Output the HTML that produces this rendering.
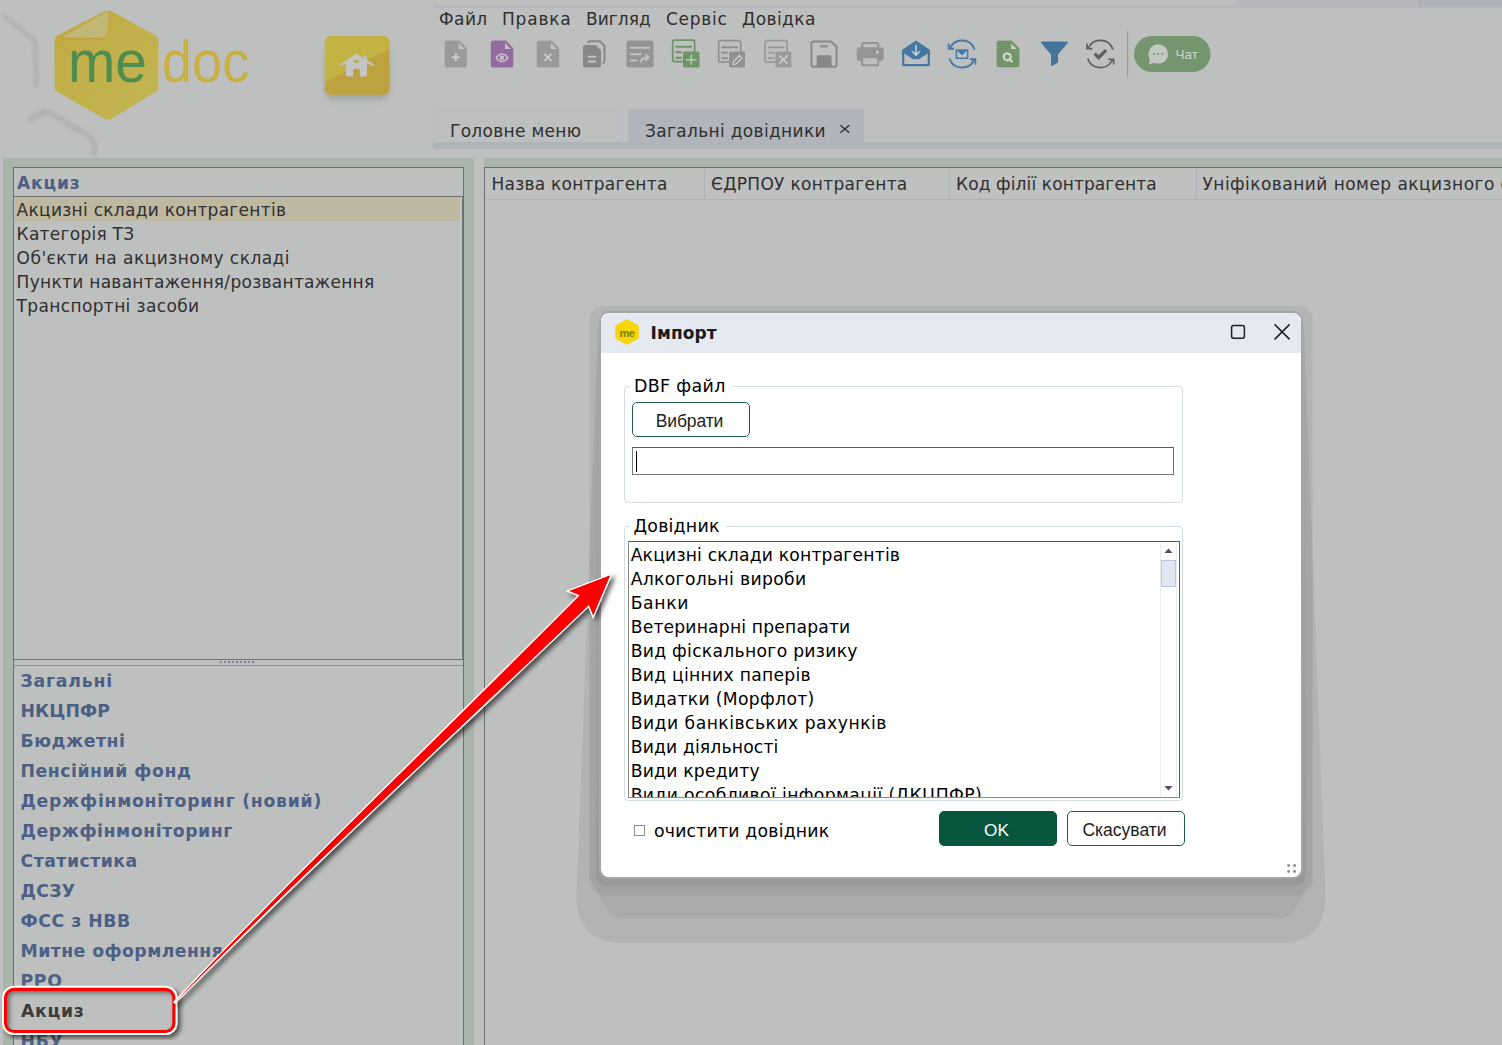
<!DOCTYPE html>
<html lang="uk">
<head>
<meta charset="utf-8">
<title>M.E.Doc — Імпорт</title>
<style>
*{box-sizing:border-box;margin:0;padding:0}
html,body{width:1502px;height:1045px;overflow:hidden}
body{background:#bec0bf;font-family:"DejaVu Sans","Liberation Sans",sans-serif;font-size:17px;color:#2f2f2f;position:relative}
.abs{position:absolute}
.t{position:absolute;white-space:nowrap;line-height:24px;height:24px}
/* top */
#topstrip{left:433px;top:5px;width:1069px;height:3px;background:#b5b8be}
#menu span{top:7px;font-size:17px;letter-spacing:.42px}
#tabstrip{left:433px;top:142px;width:1069px;height:7px;background:#b0b3b8}
.tab{top:109px;height:34px;border:1px solid #b6b9c4;border-bottom:none;font-size:17px;letter-spacing:.3px;line-height:43px;white-space:nowrap}
#tab1{left:433px;width:190px;padding-left:16px}
#tab2{left:628px;width:236px;background:#b1b4ba;border-color:#b1b4ba;padding-left:16px;letter-spacing:.33px}
/* left */
.green{background:#a9b4ab}
#lp{left:3px;top:158px;width:471px;height:887px}
#lbox{left:13px;top:167px;width:451px;height:900px;border:1px solid #6f6f6f;background:#bec0bf}
#lhead{left:14px;top:168px;width:449px;height:29px;background:#bfc1c1;border-bottom:1px solid #6f6f6f}
.bold{font-weight:bold;color:#4b6084;letter-spacing:.9px}
#sel{left:15px;top:197px;width:445px;height:24px;background:#bfb8a1}
.li{left:17px;letter-spacing:.27px;margin-top:1px}
#lbox2{left:14px;top:659px;width:449px;height:7px;border-top:1px solid #6f6f6f;border-bottom:1px solid #7f93b5;background:#bec0bf}
.cat{left:20.500px;font-weight:bold;color:#4b6084;letter-spacing:.68px;font-size:17.300px;margin-top:1px}
/* right */
#rp{left:484px;top:158px;width:1030px;height:900px}
#rbox{left:484px;top:167px;width:1030px;height:900px;border:1px solid #6f6f6f;background:#bec0bf}
#rhead{left:485px;top:168px;width:1020px;height:32px;background:#bfc1c1;border-bottom:1px solid #adb1ba}
.th{top:172px;letter-spacing:.18px}
.vs{top:168px;width:1px;height:32px;background:#adb1ba}
/* dialog */
#dlg{left:599px;top:311px;width:704px;height:568px;border:2px solid #a6a6a6;border-radius:10px;background:#fff;overflow:hidden}
#dtitle{left:0;top:0;width:700px;height:40px;background:#e4e9f2}
.seg{font-family:"Liberation Sans",sans-serif}
.fs{border:1px solid #d3dde3;border-radius:4px}
.btn{border:1.500px solid #1d5f4c;border-radius:5px;background:#fff;font-family:"Liberation Sans",sans-serif;font-size:17.500px;text-align:center;color:#1c1c1c}
.dl{left:632px;font-size:17.200px;letter-spacing:.2px;color:#000;margin-top:1px}
</style>
</head>
<body>
<!-- TOP BAR -->
<div class="abs" id="topstrip"></div>
<div class="abs" style="left:1236px;top:0;width:182px;height:5px;background:#b7b9bd"></div>
<div class="abs" style="left:1418px;top:0;width:84px;height:7px;background:#aeb1b8"></div>
<div id="menu">
<span class="t" style="left:439px;letter-spacing:0.42px">Файл</span>
<span class="t" style="left:502px;letter-spacing:0.816px">Правка</span>
<span class="t" style="left:586px;letter-spacing:0.06px">Вигляд</span>
<span class="t" style="left:666px;letter-spacing:0.708px">Сервіс</span>
<span class="t" style="left:742px;letter-spacing:0.42px">Довідка</span>
</div>

<svg class="abs" style="left:0;top:0" width="433" height="158" viewBox="0 0 433 158">
<defs>
<linearGradient id="hx" x1="0" y1="0" x2="1" y2="1"><stop offset="0" stop-color="#c3a640"/><stop offset=".4" stop-color="#c1b049"/><stop offset="1" stop-color="#c2b553"/></linearGradient>
<linearGradient id="hb" x1="0" y1="1" x2="1" y2="0"><stop offset="0" stop-color="#cdb93c"/><stop offset=".5" stop-color="#ccb73b"/><stop offset=".5" stop-color="#c9a83a"/><stop offset="1" stop-color="#c9a53a"/></linearGradient>
<filter id="bl" x="-20%" y="-20%" width="140%" height="160%"><feGaussianBlur stdDeviation="3"/></filter>
<filter id="b1"><feGaussianBlur stdDeviation=".8"/></filter>
</defs>
<g fill="none" stroke="#b3b4b4" stroke-width="6.500" stroke-linejoin="round" filter="url(#b1)">
<path d="M3 15L30 37Q35 41 35.500 48L36.500 87" stroke-width="6"/>
<path d="M28 121L42 113Q46 110.500 51 113.500L88 135.500Q93.500 139 94 145L94.500 157"/>
</g>
<path d="M107.900 10.500Q110.500 10.500 113 12L155.500 35.500Q158.500 37.500 158.500 41V87Q158.500 90.500 155.500 92L113 118Q107.900 121 103 118L57.500 92Q54.500 90.500 54.500 87V41Q54.500 37.500 57.500 35.500L103 12Q105.500 10.500 107.900 10.500Z" fill="url(#hx)"/>
<path d="M59 39.500L106.500 12.500Q109.500 11 109.500 14.500L109 32Q108.500 39 100 39.500Z" fill="#c1a342"/>
<path d="M62 37.300L106.500 12Q108.500 11 108.500 14L108 31Q107.500 37.500 100 38Z" fill="#c1b875"/>
<text x="68" y="81.800" font-family="Liberation Sans, sans-serif" font-size="60" fill="#4e8c50" textLength="79" lengthAdjust="spacingAndGlyphs">me</text>
<text x="161.800" y="81.800" font-family="Liberation Sans, sans-serif" font-size="58.500" fill="#c9b045" textLength="87.500" lengthAdjust="spacingAndGlyphs">doc</text>
<!-- home button -->
<rect x="325" y="48" width="64" height="52" rx="9" fill="#8d9690" opacity=".6" filter="url(#bl)"/>
<clipPath id="hbc"><rect x="324.800" y="35.800" width="64.700" height="58.800" rx="5.500"/></clipPath>
<g clip-path="url(#hbc)">
<rect x="324" y="35" width="67" height="61" fill="#c2b343"/>
<path d="M324.800 82.300L389.500 48.700V96H324.800Z" fill="#bea240"/>
</g>
<g fill="#c4c5c4">
<path d="M340 64.300L356.500 53.800L373.800 64.300L372.800 66L356.500 57L341 66Z"/>
<path d="M346 62.500L356.500 55.500L367 62.500V74.500Q367 76.500 365 76.500H360V70.500Q360 68.800 358.300 68.800H354.800Q353 68.800 353 70.500V76.500H348Q346 76.500 346 74.500Z"/>
<rect x="364" y="55.400" width="2.600" height="6"/>
</g>
<ellipse cx="356.500" cy="61.300" rx="3" ry="1.400" fill="#c0ac42"/>
</svg>


<svg class="abs" style="left:0;top:0" width="1502" height="160" viewBox="0 0 1502 160">
<!-- 1 new doc -->
<g transform="translate(444.5,40.5)">
<path d="M2.500 0H15L22.500 7.800V24.500a2.500 2.500 0 0 1-2.500 2.500H2.500A2.500 2.500 0 0 1 0 24.500V2.500A2.500 2.500 0 0 1 2.500 0Z" fill="#9a9a9a"/>
<path d="M14.200 2.600V8.400H20Z" fill="#c3c4c4"/>
<path d="M11.300 12.800V20.800M7.300 16.800H15.300" stroke="#cdcece" stroke-width="1.900" fill="none"/>
</g>
<!-- 2 preview doc -->
<g transform="translate(490.8,40.5)">
<path d="M2.500 0H15L22.500 7.800V24.500a2.500 2.500 0 0 1-2.500 2.500H2.500A2.500 2.500 0 0 1 0 24.500V2.500A2.500 2.500 0 0 1 2.500 0Z" fill="#946b9e"/>
<path d="M14.200 2.600V8.400H20Z" fill="#c4c3c6"/>
<path d="M5.300 17.300Q11.200 9.800 17.100 17.300Q11.200 24.800 5.300 17.300Z" fill="none" stroke="#c9bccc" stroke-width="1.600"/>
<circle cx="11.200" cy="17.300" r="2.300" fill="#c9bccc"/>
</g>
<!-- 3 delete doc -->
<g transform="translate(536.7,40.5)">
<path d="M2.500 0H15L22.500 7.800V24.500a2.500 2.500 0 0 1-2.500 2.500H2.500A2.500 2.500 0 0 1 0 24.500V2.500A2.500 2.500 0 0 1 2.500 0Z" fill="#9a9a9a"/>
<path d="M14.200 2.600V8.400H20Z" fill="#c3c4c4"/>
<path d="M7.700 13.300L14.700 20.300M14.700 13.300L7.700 20.300" stroke="#cdcece" stroke-width="1.800" fill="none"/>
</g>
<!-- 4 copy -->
<g transform="translate(583,40.5)">
<path d="M5 2.500A2 2 0 0 1 7 0.700H17L21.500 5.500V20.500A2 2 0 0 1 19.500 22.500" fill="none" stroke="#878787" stroke-width="1.900"/>
<path d="M2.5 4.500H12.500L18 10V24.500a2.500 2.500 0 0 1-2.500 2.500H2.500A2.500 2.500 0 0 1 0 24.500V7A2.500 2.500 0 0 1 2.500 4.500Z" fill="#878787"/>
<path d="M5 16.300H13M5 21H13" stroke="#c0c1c1" stroke-width="2.100"/>
</g>
<!-- 5 move row -->
<g transform="translate(626.5,40.5)">
<rect x="0" y="0" width="27" height="27" rx="2.500" fill="#959595"/>
<path d="M3.500 7.300H23.500M3.500 13.700H15M3.500 20H11" stroke="#c0c1c1" stroke-width="1.900"/>
<path d="M14 22Q14.500 17 21.500 17M18.500 13.800L22.200 17L18.500 20.400" stroke="#c0c1c1" stroke-width="1.900" fill="none"/>
</g>
<!-- 6 add row -->
<g transform="translate(672,39.500)">
<rect x="0.700" y="0.700" width="22" height="21.500" rx="2" fill="none" stroke="#6f9468" stroke-width="1.700"/>
<path d="M3.500 7.300H20M3.500 12.800H10M3.500 18.300H10" stroke="#6f9468" stroke-width="1.900"/>
<rect x="11" y="12" width="16.500" height="16" rx="1.500" fill="#6f9468"/>
<path d="M19.300 15V25.500M14 20.200H24.600" stroke="#bcc7b9" stroke-width="1.500"/>
</g>
<!-- 7 edit row -->
<g transform="translate(718,40)">
<rect x="0.700" y="0.700" width="22" height="21.500" rx="2" fill="none" stroke="#919191" stroke-width="1.700"/>
<path d="M3.500 7.300H20M3.500 12.800H10M3.500 18.300H10" stroke="#919191" stroke-width="1.900"/>
<rect x="11" y="11.500" width="16" height="16" rx="1.500" fill="#919191"/>
<path d="M15 24.500L15.600 21.500L21.500 15.500L24 18L18 24Z" stroke="#d0d1d1" stroke-width="1.200" fill="none" stroke-linejoin="round"/>
</g>
<!-- 8 delete row -->
<g transform="translate(764.4,40)">
<rect x="0.700" y="0.700" width="22" height="21.500" rx="2" fill="none" stroke="#9a9a9a" stroke-width="1.700"/>
<path d="M3.500 7.300H20M3.500 12.800H10M3.500 18.300H10" stroke="#9a9a9a" stroke-width="1.900"/>
<rect x="11" y="11.500" width="16" height="16" rx="1.500" fill="#9a9a9a"/>
<path d="M15 15.500L23 23.500M23 15.500L15 23.500" stroke="#d0d1d1" stroke-width="1.400"/>
</g>
<!-- 9 save -->
<g transform="translate(810.6,40.8)">
<path d="M2.500 0.800H20.500L26 6V24a2 2 0 0 1-2 2H2.800a2 2 0 0 1-2-2V2.800a2 2 0 0 1 2-2Z" fill="none" stroke="#888888" stroke-width="2"/>
<path d="M6 26V17a2.500 2.500 0 0 1 2.500-2.500H18.500A2.500 2.500 0 0 1 21 17V26Z" fill="#888888"/>
<path d="M9.500 5.500H17.500" stroke="#888888" stroke-width="2"/>
</g>
<!-- 10 print -->
<g transform="translate(856.700,42)">
<rect x="5.500" y="1" width="16" height="6" rx="1" fill="none" stroke="#959595" stroke-width="2"/>
<rect x="0" y="5.200" width="27" height="13.700" rx="3" fill="#959595"/>
<rect x="5.500" y="15.300" width="16" height="8" rx="1" fill="#bec0bf" stroke="#959595" stroke-width="2"/>
<circle cx="20.700" cy="10.300" r="1.400" fill="#cfd0d0"/>
</g>
<!-- 11 import mail -->
<g transform="translate(902,40.500)">
<path d="M14 0L27.900 9.300V24Q27.900 25.700 26.200 25.700H1.800Q0.100 25.700 0.100 24V9.300Z" fill="#4477a1"/>
<path d="M2.300 13.100L11 18.700H17L25.700 13.100V23.500H2.300Z" fill="#bec0bf"/>
<path d="M14 4.500V14M10.300 10.800L14 14.600L17.700 10.800" stroke="#c9d3dc" stroke-width="1.500" fill="none"/>
</g>
<!-- 12 sync mail -->
<g transform="translate(962,54)" fill="none" stroke="#4779a6" stroke-width="1.900">
<path d="M-12 -6A13.300 13.300 0 0 1 12.600 -4.500"/>
<path d="M12 6A13.300 13.300 0 0 1 -12.600 4.500"/>
<path d="M-13.300 -10.500V-5.300H-8"/>
<path d="M13.300 10.500V5.300H8"/>
<rect x="-5.600" y="-4" width="11.200" height="8.300" fill="#bcc4cb" stroke-width="1.500"/>
<path d="M-5.600 -4H5.600L0 1.600Z" fill="#4779a6" stroke="none"/>
</g>
<!-- 13 search doc -->
<g transform="translate(996.6,40.600)">
<path d="M2.500 0H15L22.800 7.800V24.300a2.500 2.500 0 0 1-2.500 2.500H2.500A2.500 2.500 0 0 1 0 24.300V2.500A2.500 2.500 0 0 1 2.500 0Z" fill="#74956b"/>
<path d="M14.400 2.600V8.400H20.200Z" fill="#c3cbc1"/>
<circle cx="10.600" cy="16.200" r="3.500" fill="none" stroke="#cfd6cd" stroke-width="2.200"/>
<path d="M13.300 19L15.800 21.500" stroke="#cfd6cd" stroke-width="2.200"/>
</g>
<!-- 14 filter -->
<path d="M1042.500 41.500H1066.500Q1068.800 41.500 1067.500 43.300L1058 54.500V62.500L1052.500 66Q1051 66.500 1051 65V54.500L1041.300 43.300Q1040 41.500 1042.500 41.500Z" fill="#44759d"/>
<!-- 15 sync check -->
<g transform="translate(1100.300,54)" fill="none" stroke="#5f5f5f" stroke-width="1.700">
<path d="M-12 -6A13.300 13.300 0 0 1 12.600 -4.500"/>
<path d="M12 6A13.300 13.300 0 0 1 -12.600 4.500"/>
<path d="M-13.300 -10.500V-5.300H-8"/>
<path d="M13.300 10.500V5.300H8"/>
<path d="M-5.600 -0.300L-1.600 3.700L5.800 -3.800" stroke-width="3.300"/>
</g>
<rect x="1127" y="31" width="1.200" height="46" fill="#9b9c9c"/>
<!-- chat -->
<rect x="1134" y="36" width="76.500" height="36" rx="18" fill="#74956d"/>
<circle cx="1158.200" cy="54" r="9.800" fill="#c3c9c1"/>
<path d="M1150 59L1148.500 64.500L1155 62.500Z" fill="#c3c9c1"/>
<circle cx="1154.200" cy="54" r="1" fill="#74956d"/><circle cx="1158.200" cy="54" r="1" fill="#74956d"/><circle cx="1162.200" cy="54" r="1" fill="#74956d"/>
<text x="1175.500" y="59" font-family="Liberation Sans, sans-serif" font-size="13.500" fill="#cdd3cb">Чат</text>
</svg>

<div class="abs" id="tabstrip"></div>
<div class="abs tab" id="tab1">Головне меню</div>
<div class="abs tab" id="tab2">Загальні довідники</div>

<svg class="abs" style="left:838px;top:122px" width="14" height="14" viewBox="0 0 14 14"><path d="M2.400 3.200L11.200 10.800M11.200 3.200L2.400 10.800" stroke="#333" stroke-width="1.500" fill="none"/></svg>
<!-- LEFT PANEL -->
<div class="abs green" id="lp"></div>
<div class="abs" id="lbox"></div>
<div class="abs" id="lhead"></div>
<span class="t bold" style="left:17px;top:171px">Акциз</span>
<div class="abs" id="sel"></div>
<div class="abs" style="left:460px;top:197px;width:3px;height:462px;background:#c3c5c6;border-right:1px solid #6f6f6f"></div>
<span class="t li" style="left:16.6px;letter-spacing:0.284px;top:197px">Акцизні склади контрагентів</span>
<span class="t li" style="left:16.6px;letter-spacing:0.267px;top:221px">Категорія ТЗ</span>
<span class="t li" style="left:16.6px;letter-spacing:0.461px;top:245px">Об'єкти на акцизному складі</span>
<span class="t li" style="left:16.6px;letter-spacing:0.292px;top:269px">Пункти навантаження/розвантаження</span>
<span class="t li" style="left:16.6px;letter-spacing:0.365px;top:293px">Транспортні засоби</span>
<div class="abs" id="lbox2"></div>
<div class="abs" style="left:220px;top:661px;width:36px;height:2px;background:repeating-linear-gradient(to right,#7f8aa0 0,#7f8aa0 2px,transparent 2px,transparent 4px)"></div>
<span class="t cat" style="left:20.5px;letter-spacing:0.782px;top:668px">Загальні</span>
<span class="t cat" style="left:20.5px;letter-spacing:0.104px;top:698px">НКЦПФР</span>
<span class="t cat" style="left:20.5px;letter-spacing:0.524px;top:728px">Бюджетні</span>
<span class="t cat" style="left:20.5px;letter-spacing:0.527px;top:758px">Пенсійний фонд</span>
<span class="t cat" style="left:20.5px;letter-spacing:0.713px;top:788px">Держфінмоніторинг (новий)</span>
<span class="t cat" style="left:20.5px;letter-spacing:0.556px;top:818px">Держфінмоніторинг</span>
<span class="t cat" style="left:20.5px;letter-spacing:0.5px;top:848px">Статистика</span>
<span class="t cat" style="left:20.5px;letter-spacing:0.32px;top:878px">ДСЗУ</span>
<span class="t cat" style="left:20.5px;letter-spacing:0.546px;top:908px">ФСС з НВВ</span>
<span class="t cat" style="left:20.5px;letter-spacing:0.44px;top:938px">Митне оформлення</span>
<span class="t cat" style="top:968px">РРО</span>
<span class="t cat" style="top:1028px">НБУ</span>
<!--REDBOX-->

<!-- RIGHT PANEL -->
<div class="abs green" id="rp"></div>
<div class="abs" id="rbox"></div>
<div class="abs" id="rhead"></div>
<span class="t th" style="left:491.500px;letter-spacing:0.25px">Назва контрагента</span>
<span class="t th" style="left:711px;letter-spacing:0.306px">ЄДРПОУ контрагента</span>
<span class="t th" style="left:956px;letter-spacing:0.117px">Код філії контрагента</span>
<span class="t th" style="left:1202.500px;letter-spacing:.46px">Уніфікований номер акцизного складу</span>
<div class="abs vs" style="left:704px"></div>
<div class="abs vs" style="left:949px"></div>
<div class="abs vs" style="left:1196px"></div>

<!-- DIALOG -->
<svg class="abs" style="left:560px;top:290px" width="790" height="670" viewBox="560 290 790 670">
<defs>
<linearGradient id="g1" x1="0" y1="0" x2="0" y2="1"><stop offset="0" stop-color="#000" stop-opacity=".03"/><stop offset="1" stop-color="#000" stop-opacity=".046"/></linearGradient>
<linearGradient id="g2" x1="0" y1="0" x2="0" y2="1"><stop offset="0" stop-color="#000" stop-opacity="0"/><stop offset="1" stop-color="#000" stop-opacity=".062"/></linearGradient>
</defs>
<path d="M598 325L1304 325L1325.500 895Q1325.500 943 1280 943L622 943Q576.500 943 576.500 895Z" fill="#000" fill-opacity=".058"/>
<path d="M589.500 320Q589.500 306 603 306L1299 306Q1312.700 306 1312.700 320L1312.700 877L1296 908Q1291 918.500 1279 918.500L623 918.500Q611 918.500 606 908L589.500 877Z" fill="url(#g1)"/>
<rect x="589.500" y="306" width="723.200" height="589.500" rx="15" fill="url(#g1)"/>
<rect x="596" y="311" width="710" height="575" rx="11" fill="url(#g2)"/>
</svg>
<div class="abs" id="dlg">
<div class="abs" id="dtitle"></div>
</div>

<!-- dialog title -->
<svg class="abs" style="left:614px;top:319px" width="26" height="26" viewBox="0 0 26 26">
<polygon points="13,1 24,7 24,19 13,25 2,19 2,7" fill="#f8d40c" stroke="#f8d40c" stroke-width="1.5" stroke-linejoin="round"/>
<text x="13" y="17.5" text-anchor="middle" font-family="Liberation Sans, sans-serif" font-weight="bold" font-size="11" fill="#74841a" letter-spacing="-0.5">me</text>
</svg>
<span class="t" style="left:650.5px;letter-spacing:0.1px;top:321px;font-weight:bold;color:#1b1b1b">Імпорт</span>
<svg class="abs" style="left:1229px;top:323px" width="18" height="18" viewBox="0 0 18 18"><rect x="2.6" y="2.4" width="12.8" height="12.8" rx="2" fill="none" stroke="#1f1f1f" stroke-width="1.5"/></svg>
<svg class="abs" style="left:1272px;top:322px" width="20" height="20" viewBox="0 0 20 20"><path d="M2.6 2.4 L17.6 17.4 M17.6 2.4 L2.6 17.4" stroke="#1f1f1f" stroke-width="1.5" fill="none"/></svg>
<!-- fieldset 1 -->
<div class="abs fs" style="left:624px;top:386px;width:559px;height:117px"></div>
<span class="t" style="left:630px;letter-spacing:0.35px;top:374px;background:#fff;padding:0 6px 0 4px;color:#000;font-size:17.400px">DBF файл</span>
<div class="abs btn" style="left:632px;top:402px;width:118px;height:35px;line-height:36px;letter-spacing:-.15px;padding-right:3px">Вибрати</div>
<div class="abs" style="left:632px;top:447px;width:542px;height:28px;border:1px solid #767676;border-top-color:#5a5a5a;background:#fff"></div>
<div class="abs" style="left:636px;top:451px;width:1px;height:21px;background:#000"></div>
<!-- fieldset 2 -->
<div class="abs fs" style="left:624px;top:526px;width:559px;height:275px"></div>
<span class="t" style="left:629.5px;letter-spacing:0.2px;top:514px;background:#fff;padding:0 6px 0 4px;color:#000;font-size:17.400px">Довідник</span>
<div class="abs" id="dlist" style="left:628px;top:541px;width:552px;height:257px;border:1px solid #8a8a8a;border-top:1.5px solid #555;border-right-color:#555;background:#fff;overflow:hidden"></div>
<div class="abs" style="left:628px;top:542px;width:530px;height:255px;overflow:hidden">
<span class="t dl" style="left:2.7px;letter-spacing:0.171px;top:0px">Акцизні склади контрагентів</span>
<span class="t dl" style="left:2.7px;letter-spacing:0.322px;top:24px">Алкогольні вироби</span>
<span class="t dl" style="left:2.7px;letter-spacing:0.644px;top:48px">Банки</span>
<span class="t dl" style="left:2.7px;letter-spacing:0.164px;top:72px">Ветеринарні препарати</span>
<span class="t dl" style="left:2.7px;letter-spacing:0.279px;top:96px">Вид фіскального ризику</span>
<span class="t dl" style="left:2.7px;letter-spacing:0.264px;top:120px">Вид цінних паперів</span>
<span class="t dl" style="left:2.7px;letter-spacing:0.333px;top:144px">Видатки (Морфлот)</span>
<span class="t dl" style="left:2.7px;letter-spacing:0.478px;top:168px">Види банківських рахунків</span>
<span class="t dl" style="left:2.7px;letter-spacing:0.148px;top:192px">Види діяльності</span>
<span class="t dl" style="left:2.7px;letter-spacing:0.216px;top:216px">Види кредиту</span>
<span class="t dl" style="left:2.700px;letter-spacing:.38px;top:240px">Види особливої інформації (ДКЦПФР)</span>
</div>
<!-- scrollbar -->
<div class="abs" style="left:1160px;top:543px;width:17px;height:254px;background:#fff;border-left:1px solid #ececec;border-right:1px solid #ececec"></div>
<div class="abs" style="left:1161px;top:560px;width:15px;height:27px;background:#e1e7f1;border:1px solid #b9c8dd"></div>
<svg class="abs" style="left:1164px;top:548px" width="9" height="6" viewBox="0 0 9 6"><polygon points="4.5,0.6 8.6,5 0.4,5" fill="#4d4d78"/></svg>
<svg class="abs" style="left:1164px;top:785px" width="9" height="6" viewBox="0 0 9 6"><polygon points="0.4,1 8.6,1 4.5,5.4" fill="#4d4d78"/></svg>
<!-- bottom row -->
<div class="abs" style="left:634px;top:825px;width:11px;height:11px;border:1px solid #8e8e8e;background:#fff"></div>
<span class="t" style="left:654px;letter-spacing:0.194px;top:819px;color:#000;font-size:17.300px">очистити довідник</span>
<div class="abs btn" style="left:939px;top:811px;width:118px;height:35px;line-height:37px;background:#07573f;border-color:#07573f;color:#fff;font-size:17.200px;padding-right:3px">OK</div>
<div class="abs btn" style="left:1067px;top:811px;width:118px;height:35px;line-height:37px;padding-right:3px">Скасувати</div>
<svg class="abs" style="left:1286px;top:863px" width="12" height="12" viewBox="0 0 12 12"><g fill="#8d8d8d"><circle cx="2.600" cy="2.500" r="1.450"/><circle cx="8.600" cy="2.500" r="1.450"/><circle cx="2.600" cy="8.500" r="1.450"/><circle cx="8.600" cy="8.500" r="1.450"/></g></svg>


<svg class="abs" style="left:0;top:540px" width="700" height="505" viewBox="0 540 700 505">
<defs>
<filter id="ds" x="-10%" y="-10%" width="130%" height="130%"><feGaussianBlur in="SourceAlpha" stdDeviation="2.600"/><feOffset dx="2.500" dy="2.500"/><feComponentTransfer><feFuncA type="linear" slope=".62"/></feComponentTransfer><feMerge><feMergeNode/><feMergeNode in="SourceGraphic"/></feMerge></filter>
<filter id="is" x="-5%" y="-20%" width="110%" height="140%"><feGaussianBlur stdDeviation="2.500"/></filter>
<clipPath id="bc"><rect x="7.200" y="990.900" width="165.100" height="39" rx="7"/></clipPath>
</defs>
<g filter="url(#ds)">
<rect x="5.600" y="989.300" width="168.300" height="42.200" rx="8.500" fill="#bec0bf" stroke="#fff" stroke-width="7"/>
<rect x="5.600" y="989.300" width="168.300" height="42.200" rx="8.500" fill="#bec0bf" stroke="#f00" stroke-width="3.200"/>
</g>
<g clip-path="url(#bc)"><rect x="6.600" y="990.300" width="171" height="46" rx="9" fill="none" stroke="#4a4a4a" stroke-width="5" filter="url(#is)" opacity=".85"/></g>
<g filter="url(#ds)">
<path d="M174 1003C306.100 863.900 444.800 731.300 580 595.300L569.500 591L610 575.600L593.200 615.300L589 604.700C450.800 737.600 309.100 867 174 1003Z" fill="#f00" stroke="#fff" stroke-width="3" stroke-linejoin="miter" paint-order="stroke"/>
<path d="M174 1003C306.100 863.900 444.800 731.300 580 595.300L569.500 591L610 575.600L593.200 615.300L589 604.700C450.800 737.600 309.100 867 174 1003Z" fill="#f00"/>
</g>
</svg>
<span class="t" style="left:21px;letter-spacing:0.68px;top:999px;font-weight:bold;color:#3c3c3c;font-size:17.300px">Акциз</span>

</body>
</html>
